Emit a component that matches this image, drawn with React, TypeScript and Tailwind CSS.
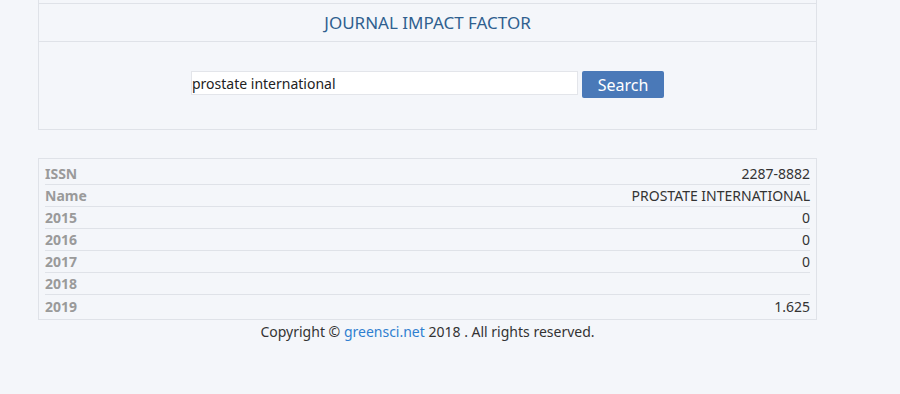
export default function App() {
  const rows: [string, string][] = [
    ["ISSN", "2287-8882"],
    ["Name", "PROSTATE INTERNATIONAL"],
    ["2015", "0"],
    ["2016", "0"],
    ["2017", "0"],
    ["2018", ""],
    ["2019", "1.625"],
  ];

  return (
    <div
      className="min-h-[394px] w-[900px] overflow-hidden bg-[#f4f6fa] text-[#333]"
      style={{ fontFamily: '"Noto Sans", "Open Sans", Arial, sans-serif' }}
    >
      <div className="ml-[38px] w-[779px]">
        {/* Search panel */}
        <div className="-mt-[20px] border border-[#dfe2e8] bg-[#f4f6fa]">
          <div className="h-[23px] border-b border-[#dfe2e8]" />
          <div className="flex h-[38px] items-center justify-center border-b border-[#dfe2e8] text-[17px] text-[#2f5f8f]">
            JOURNAL IMPACT FACTOR
          </div>
          <div className="flex h-[87px] items-start justify-center pt-[29px]">
            <input
              className="h-[24px] w-[387px] border border-[#e3e5ea] bg-white px-0 text-[14px] text-[#222] outline-none"
              defaultValue="prostate international"
            />
            <button className="ml-[4px] h-[27px] w-[82px] rounded-[2px] bg-[#4a79b8] text-[16px] text-white">
              Search
            </button>
          </div>
        </div>

        {/* Result table */}
        <div className="mt-[28px] border border-[#dfe2e8] px-[6px] pt-[4px] pb-[2px]">
          {rows.map(([label, value], i) => (
            <div
              key={label}
              className={`flex h-[22px] items-center justify-between text-[14px] ${
                i < rows.length - 1 ? "border-b border-[#dfe2e8]" : ""
              }`}
            >
              <span className="font-bold text-[#9a9a9a]">{label}</span>
              <span className="text-[#333]">{value}</span>
            </div>
          ))}
        </div>

        {/* Footer */}
        <div className="pt-[1px] text-center text-[14px] text-[#333]">
          Copyright © <a className="text-[#2f7fd0]">greensci.net</a> 2018 . All rights reserved.
        </div>
      </div>
    </div>
  );
}
